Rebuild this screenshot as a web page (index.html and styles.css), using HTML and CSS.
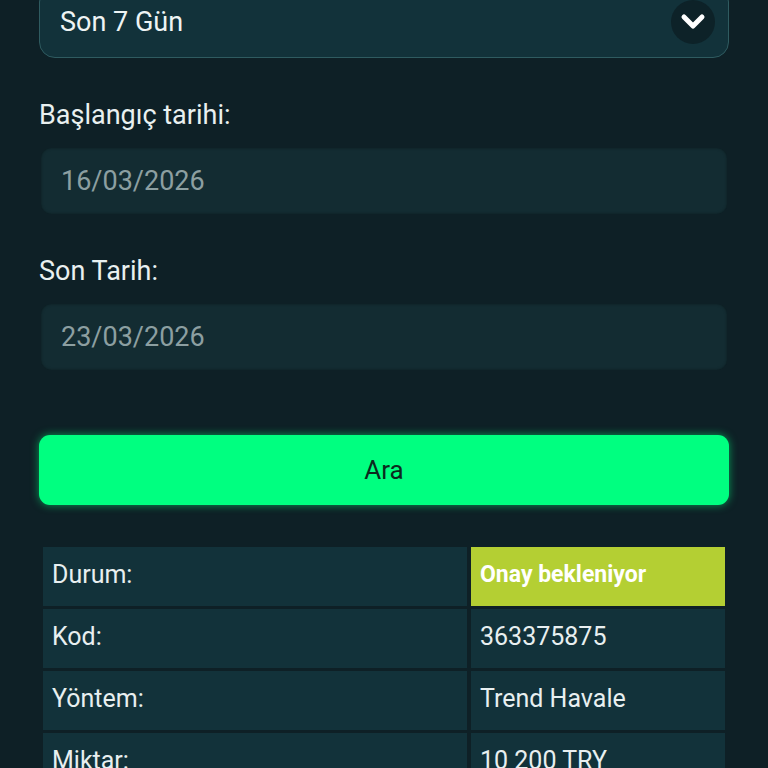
FILE: index.html
```html
<!DOCTYPE html>
<html lang="tr">
<head>
    <meta charset="UTF-8">
    <meta name="viewport" content="width=device-width, initial-scale=1.0">
    <title>İşlem Geçmişi</title>
    <link rel="stylesheet" href="styles.css">
</head>
<body>
    <div class="container">
        <div class="period-select">
            <span class="period-text">Son 7 Gün</span>
            <span class="period-arrow">
                <svg width="26" height="18" viewBox="0 0 26 18">
                    <path d="M4 4 L13 13 L22 4" fill="none" stroke="#ffffff" stroke-width="5" stroke-linecap="round" stroke-linejoin="round"/>
                </svg>
            </span>
        </div>

        <div class="form-group">
            <label for="startDate">Başlangıç tarihi:</label>
            <div class="date-input" id="startDate">16/03/2026</div>
        </div>

        <div class="form-group">
            <label for="endDate">Son Tarih:</label>
            <div class="date-input" id="endDate">23/03/2026</div>
        </div>

        <button class="search-btn">Ara</button>

        <table class="result-table">
            <colgroup>
                <col class="col-label">
                <col class="col-value">
            </colgroup>
            <tr>
                <td>Durum:</td>
                <td class="status-pending">Onay bekleniyor</td>
            </tr>
            <tr>
                <td>Kod:</td>
                <td>363375875</td>
            </tr>
            <tr>
                <td>Yöntem:</td>
                <td>Trend Havale</td>
            </tr>
            <tr>
                <td>Miktar:</td>
                <td>10 200 TRY</td>
            </tr>
        </table>
    </div>
</body>
</html>
```

FILE: styles.css
```css
body {
    font-family: Roboto, 'Noto Sans', sans-serif;
    background-color: #0e2026;
    color: #e6eeee;
    margin: 0;
    padding: 0 39px;
    overflow: hidden;
}
.container {
    margin-top: -14px;
}
.period-select {
    height: 72px;
    box-sizing: border-box;
    background-color: #12323a;
    border: 1px solid #2f5b60;
    border-radius: 16px;
    display: flex;
    align-items: center;
    justify-content: space-between;
    padding: 0 13px 0 20px;
}
.period-text {
    font-size: 27px;
    color: #eef4f4;
}
.period-arrow {
    width: 44px;
    height: 44px;
    border-radius: 50%;
    background-color: #0d2228;
    display: flex;
    align-items: center;
    justify-content: center;
}
.form-group {
    margin-top: 42px;
}
.form-group label {
    display: block;
    font-size: 27px;
    line-height: 30px;
    color: #e9f0f0;
    margin-bottom: 18px;
}
.date-input {
    height: 66px;
    margin: 0 2px;
    box-sizing: border-box;
    background-color: #132c32;
    border-radius: 10px;
    box-shadow: inset 0 0 3px rgba(0, 0, 0, 0.35);
    display: flex;
    align-items: center;
    padding-left: 20px;
    font-size: 27px;
    color: #8c9fa1;
}
.search-btn {
    display: block;
    width: 100%;
    height: 70px;
    margin-top: 65px;
    background-color: #00ff80;
    border: none;
    border-radius: 11px;
    box-shadow: 0 0 8px rgba(0, 255, 128, 0.55);
    font-family: Roboto, 'Noto Sans', sans-serif;
    font-size: 26px;
    color: #0c2a1e;
    cursor: pointer;
}
.result-table {
    width: 100%;
    margin-top: 39px;
    border-spacing: 4px 3px;
    font-size: 25px;
}
.col-label {
    width: 424px;
}
.result-table td {
    height: 55px;
    padding: 0 8px 4px 9px;
    background-color: #12323a;
    color: #e8eff0;
    vertical-align: middle;
}
.result-table td.status-pending {
    background-color: #b4cf33;
    color: #ffffff;
    font-weight: bold;
    font-size: 23px;
}
```
